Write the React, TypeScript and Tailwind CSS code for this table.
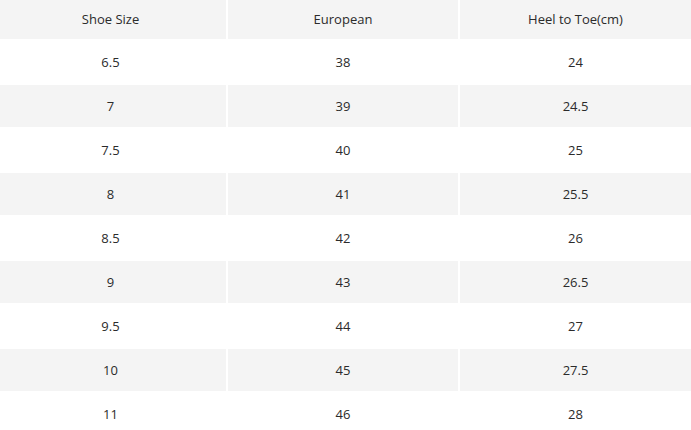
import React from "react";

const rows = [
  ["6.5", "38", "24"],
  ["7", "39", "24.5"],
  ["7.5", "40", "25"],
  ["8", "41", "25.5"],
  ["8.5", "42", "26"],
  ["9", "43", "26.5"],
  ["9.5", "44", "27"],
  ["10", "45", "27.5"],
  ["11", "46", "28"],
];

export default function App() {
  return (
    <div className="w-[691px] h-[430px] overflow-hidden bg-white text-[#2b2b2b] text-[13px] font-['Open_Sans',sans-serif]">
      <div className="grid grid-cols-[226px_230px_1fr] gap-x-[2px] gap-y-[2px]">
        {["Shoe Size", "European", "Heel to Toe(cm)"].map((h, i) => (
          <div
            key={h}
            className={`h-[39px] flex items-center justify-center bg-[#f4f4f4] ${i === 0 ? "pr-[5px]" : ""}`}
          >
            {h}
          </div>
        ))}
        {rows.map((r, ri) =>
          r.map((c, ci) => (
            <div
              key={ri + "-" + ci}
              className={`h-[42px] pt-[2px] flex items-center justify-center ${ri % 2 === 1 ? "bg-[#f4f4f4]" : "bg-white"} ${ci === 0 ? "pr-[5px]" : ""}`}
            >
              {c}
            </div>
          ))
        )}
      </div>
    </div>
  );
}
